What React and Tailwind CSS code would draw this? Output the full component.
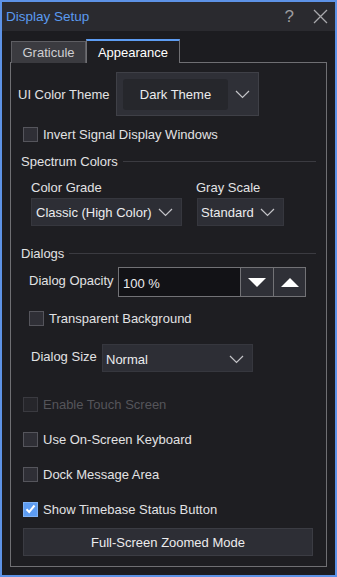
import React from "react";

const Chevron = ({ className = "" }) => (
  <svg width="15" height="9" viewBox="0 0 15 9" className={className}>
    <path d="M1 1 L7.5 7.5 L14 1" fill="none" stroke="#c4c4c8" strokeWidth="1.2" />
  </svg>
);

const Checkbox = ({ checked = false, disabled = false }) => (
  <div
    className={
      "w-[15px] h-[15px] shrink-0 flex items-center justify-center border " +
      (checked
        ? "bg-[#5d9cf2] border-[#7fb2f5]"
        : disabled
        ? "bg-[#26262b] border-[#3a3a40]"
        : "bg-[#2f2f36] border-[#55555c]")
    }
  >
    {checked && (
      <svg width="11" height="10" viewBox="0 0 11 10">
        <path d="M1.5 5.2 L4.2 8 L9.5 1.5" fill="none" stroke="#ffffff" strokeWidth="2" />
      </svg>
    )}
  </div>
);

const CheckRow = ({ label, checked, disabled, className = "" }) => (
  <div className={"flex items-center gap-[5px] h-[16px] " + className}>
    <Checkbox checked={checked} disabled={disabled} />
    <span className={disabled ? "text-[#55555a]" : "text-[#e2e2e4]"}>{label}</span>
  </div>
);

const Select = ({ value, className = "" }) => (
  <div
    className={
      "flex items-center justify-between h-[28px] bg-[#2d2e35] border border-[#36373e] pl-[3px] pr-[8px] text-[#ececee] " +
      className
    }
  >
    <span>{value}</span>
    <Chevron />
  </div>
);

const SectionHeader = ({ title, className = "" }) => (
  <div className={"flex items-center h-[16px] pl-[10px] pr-[10px] " + className}>
    <span className="text-[#e2e2e4]">{title}</span>
    <div className="flex-1 h-px bg-[#3b3b41] ml-[5px]" />
  </div>
);

export default function App() {
  return (
    <div
      className="w-[337px] h-[577px] bg-[#1c1c20] border-2 border-[#5d92e6] flex flex-col text-[13px] leading-none"
      style={{ fontFamily: '"Liberation Sans", Arial, sans-serif' }}
    >
      {/* title bar */}
      <div className="h-[29px] shrink-0 bg-[#2a2a2f] flex items-center pl-[4px] pr-[7px]">
        <span className="text-[#5a9af0] text-[13.5px]">Display Setup</span>
        <span className="ml-auto text-[#9c9ca0] text-[17px] mr-[19px]">?</span>
        <svg width="15" height="15" viewBox="0 0 15 15">
          <path d="M1 1 L14 14 M14 1 L1 14" stroke="#a8a8ac" strokeWidth="1.3" />
        </svg>
      </div>

      {/* body */}
      <div className="flex-1 flex flex-col px-[8px] pt-[8px] pb-[8px]">
        {/* tabs */}
        <div className="flex items-end -mb-px relative z-10">
          <div className="ml-px w-[75px] h-[22px] bg-[#3b3b40] border border-b-0 border-[#5e5e63] flex items-center justify-center text-[#cfcfd2]">
            Graticule
          </div>
          <div className="w-[94px] h-[24px] bg-[#1e1e22] border-t-2 border-t-[#5d9cf2] border-x border-x-[#6f6f73] flex items-center justify-center text-white">
            Appearance
          </div>
        </div>

        {/* panel */}
        <div className="flex-1 bg-[#1e1e22] border border-[#6f6f73] flex flex-col">
          <div className="flex items-center mt-[9px] pl-[7px]">
            <span className="w-[98px] text-[#e2e2e4]">UI Color Theme</span>
            <div className="w-[143px] h-[44px] bg-[#2f3037] border border-[#3f4047] flex items-center pl-[6px] pr-[5px]">
              <div className="w-[105px] h-[31px] rounded-[3px] bg-[#26272c] flex items-center justify-center text-[#ececee]">
                Dark Theme
              </div>
              <Chevron className="ml-auto mr-[3px]" />
            </div>
          </div>

          <CheckRow label="Invert Signal Display Windows" className="mt-[10px] pl-[12px]" />

          <SectionHeader title="Spectrum Colors" className="mt-[11px]" />

          <div className="flex pl-[20px] mt-[10px]">
            <div className="w-[166px] flex flex-col">
              <span className="h-[16px] flex items-center text-[#e2e2e4]">Color Grade</span>
              <Select value="Classic (High Color)" className="w-[151px] mt-[3px] pl-[4px]" />
            </div>
            <div className="flex flex-col">
              <span className="h-[16px] flex items-center text-[#e2e2e4] -ml-px">Gray Scale</span>
              <Select value="Standard" className="w-[87px] mt-[3px]" />
            </div>
          </div>

          <SectionHeader title="Dialogs" className="mt-[19px]" />

          <div className="flex items-center mt-[6px] pl-[18px]">
            <span className="w-[89px] text-[#e2e2e4] -mt-[3px]">Dialog Opacity</span>
            <div className="flex h-[30px] border border-[#727276]">
              <div className="w-[121px] bg-[#121216] flex items-center pl-[4px] pt-[3px] text-[#ececee]">100 %</div>
              <div className="w-[33px] bg-[#2f3037] border-l border-[#727276] flex items-center justify-center">
                <svg width="18" height="9" viewBox="0 0 18 9">
                  <path d="M0 0 H18 L9 9 Z" fill="#ffffff" />
                </svg>
              </div>
              <div className="w-[32px] bg-[#2f3037] border-l border-[#727276] flex items-center justify-center">
                <svg width="18" height="9" viewBox="0 0 18 9">
                  <path d="M0 9 H18 L9 0 Z" fill="#ffffff" />
                </svg>
              </div>
            </div>
          </div>

          <CheckRow label="Transparent Background" className="mt-[13px] pl-[18px]" />

          <div className="flex items-center mt-[18px] pl-[20px]">
            <span className="w-[71px] text-[#e2e2e4] -mt-[4px]">Dialog Size</span>
            <Select value="Normal" className="w-[151px] pt-[3px]" />
          </div>

          <CheckRow label="Enable Touch Screen" disabled className="mt-[24px] pl-[12px]" />
          <CheckRow label="Use On-Screen Keyboard" className="mt-[19px] pl-[12px]" />
          <CheckRow label="Dock Message Area" className="mt-[19px] pl-[12px]" />
          <CheckRow label="Show Timebase Status Button" checked className="mt-[19px] pl-[12px]" />

          <button className="ml-[12px] mt-[11px] w-[290px] h-[28px] bg-[#2d2e35] border border-[#3b3c43] text-[#ececee] flex items-center justify-center">
            Full-Screen Zoomed Mode
          </button>
        </div>
      </div>
    </div>
  );
}
